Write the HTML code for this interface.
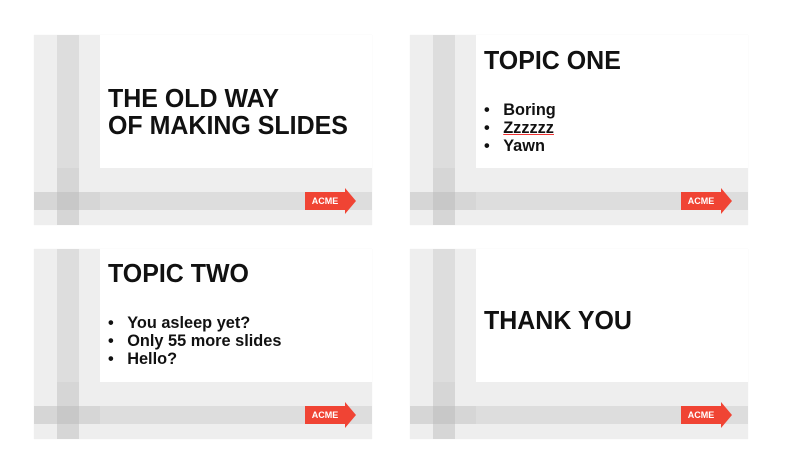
<html><head><style>
body{margin:0;width:786px;height:464px;background:#fff;position:relative;font-family:"Liberation Sans",sans-serif;overflow:hidden}
.s{position:absolute;width:338px;height:190px;background:#fff;overflow:hidden;box-shadow:0 0 1px #eee}
.b{position:absolute}
.t{position:absolute;left:74px;font-weight:bold;color:#111;font-size:26px;line-height:27px;white-space:nowrap;transform:scaleX(0.96);transform-origin:left}
ul{position:absolute;left:74px;margin:0;padding:0;list-style:none;font-weight:bold;font-size:17px;line-height:18px;color:#111;transform:scaleX(0.96);transform-origin:left;white-space:nowrap}
ul li:before{content:"•";display:inline-block;width:20px}
.acme{position:absolute;left:271px;top:157px;width:40px;height:18px;background:#f04434;color:#fff;font-size:9px;font-weight:bold;line-height:18px;text-align:center}
.acme:after{content:"";position:absolute;left:40px;top:-4px;border-left:11px solid #f04434;border-top:13px solid transparent;border-bottom:13px solid transparent}
</style></head><body>
<div class="s" style="left:34px;top:35px">
<div class="b" style="left:0;top:0;width:66px;height:190px;background:#eee"></div>
<div class="b" style="left:0;top:133px;width:338px;height:57px;background:#eee"></div>
<div class="b" style="left:0;top:157px;width:338px;height:18px;background:#ddd"></div>
<div class="b" style="left:23px;top:0;width:22px;height:190px;background:#ddd"></div>
<div class="b" style="left:23px;top:133px;width:22px;height:57px;background:#d6d6d6"></div>
<div class="b" style="left:0;top:157px;width:66px;height:18px;background:#d6d6d6"></div><div class="b" style="left:23px;top:157px;width:22px;height:18px;background:#c8c8c8"></div>
<div class="t" style="top:50px">THE OLD WAY<br>OF MAKING SLIDES</div>
<div class="acme">ACME</div>
</div>

<div class="s" style="left:410px;top:35px">
<div class="b" style="left:0;top:0;width:66px;height:190px;background:#eee"></div>
<div class="b" style="left:0;top:133px;width:338px;height:57px;background:#eee"></div>
<div class="b" style="left:0;top:157px;width:338px;height:18px;background:#ddd"></div>
<div class="b" style="left:23px;top:0;width:22px;height:190px;background:#ddd"></div>
<div class="b" style="left:23px;top:133px;width:22px;height:57px;background:#d6d6d6"></div>
<div class="b" style="left:0;top:157px;width:66px;height:18px;background:#d6d6d6"></div><div class="b" style="left:23px;top:157px;width:22px;height:18px;background:#c8c8c8"></div>
<div class="t" style="top:12px">TOPIC ONE</div>
<ul style="top:66px"><li>Boring</li><li><span style="text-decoration:underline;text-decoration-color:#e33">Zzzzzz</span></li><li>Yawn</li></ul>
<div class="acme">ACME</div>
</div>

<div class="s" style="left:34px;top:249px">
<div class="b" style="left:0;top:0;width:66px;height:190px;background:#eee"></div>
<div class="b" style="left:0;top:133px;width:338px;height:57px;background:#eee"></div>
<div class="b" style="left:0;top:157px;width:338px;height:18px;background:#ddd"></div>
<div class="b" style="left:23px;top:0;width:22px;height:190px;background:#ddd"></div>
<div class="b" style="left:23px;top:133px;width:22px;height:57px;background:#d6d6d6"></div>
<div class="b" style="left:0;top:157px;width:66px;height:18px;background:#d6d6d6"></div><div class="b" style="left:23px;top:157px;width:22px;height:18px;background:#c8c8c8"></div>
<div class="t" style="top:11px">TOPIC TWO</div>
<ul style="top:65px"><li>You asleep yet?</li><li>Only 55 more slides</li><li>Hello?</li></ul>
<div class="acme">ACME</div>
</div>

<div class="s" style="left:410px;top:249px">
<div class="b" style="left:0;top:0;width:66px;height:190px;background:#eee"></div>
<div class="b" style="left:0;top:133px;width:338px;height:57px;background:#eee"></div>
<div class="b" style="left:0;top:157px;width:338px;height:18px;background:#ddd"></div>
<div class="b" style="left:23px;top:0;width:22px;height:190px;background:#ddd"></div>
<div class="b" style="left:23px;top:133px;width:22px;height:57px;background:#d6d6d6"></div>
<div class="b" style="left:0;top:157px;width:66px;height:18px;background:#d6d6d6"></div><div class="b" style="left:23px;top:157px;width:22px;height:18px;background:#c8c8c8"></div>
<div class="t" style="top:58px">THANK YOU</div>
<div class="acme">ACME</div>
</div>
</body></html>
